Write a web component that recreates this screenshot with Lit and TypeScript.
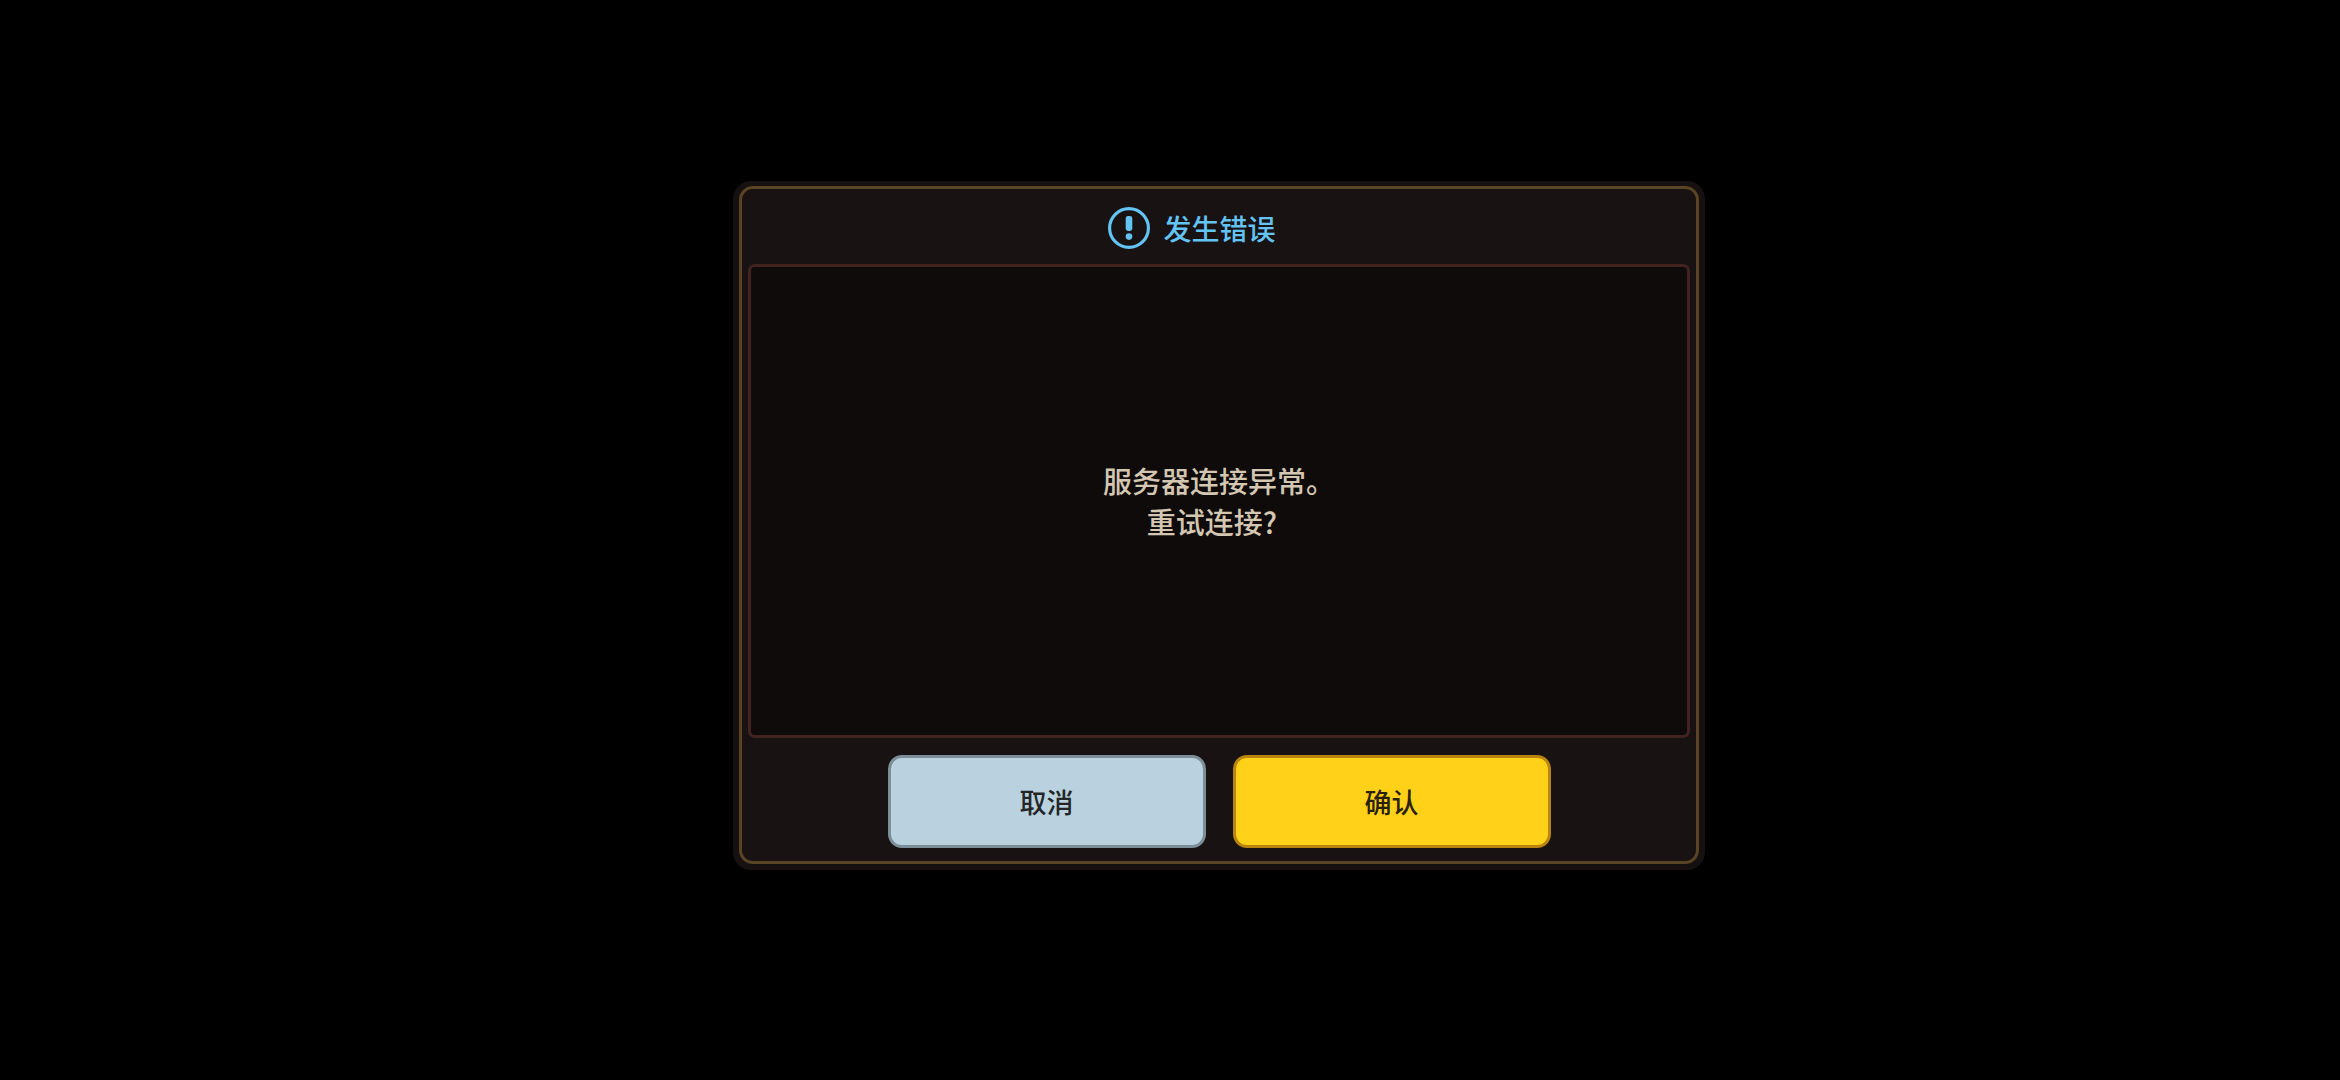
import { LitElement, html, css } from "lit";
import { customElement, property } from "lit/decorators.js";

@customElement("error-dialog")
export class ErrorDialog extends LitElement {
  @property() heading = "";
  @property({ attribute: false }) lines: string[] = [];

  static styles = css`
    :host {
      display: block;
      width: 100%;
      max-width: 972px;
      font-family: "Noto Sans CJK SC", sans-serif;
      font-weight: 500;
    }
    .dialog {
      box-sizing: border-box;
      padding: 5px 6px 6px;
      border-radius: 18px;
      background: #161110;
    }
    .frame {
      display: flex;
      flex-direction: column;
      padding: 0 6px 13px;
      border: 3px solid #594424;
      border-radius: 14px;
      background: #181212;
    }
    .header {
      box-sizing: border-box;
      display: flex;
      align-items: center;
      justify-content: center;
      gap: 13px;
      height: 75px;
      padding: 3px 54px 0 0;
      color: #63c3f2;
    }
    .icon {
      width: 42px;
      height: 42px;
      flex: none;
    }
    .title {
      margin: 0;
      font-size: 28px;
      line-height: 42px;
      font-weight: 500;
    }
    .message {
      display: flex;
      flex-direction: column;
      align-items: center;
      justify-content: center;
      min-height: 468px;
      border: 3px solid #42231f;
      border-radius: 7px;
      background: #0f0b0a;
      color: #d3c7b2;
      font-size: 29px;
      line-height: 41px;
    }
    .line {
      margin: 0;
    }
    .line:last-child {
      padding-right: 14px;
    }
    .actions {
      display: flex;
      justify-content: center;
      gap: 27px;
      padding-top: 17px;
    }
    .button {
      box-sizing: border-box;
      flex: 0 1 318px;
      height: 93px;
      padding: 0;
      border: 3px solid;
      border-radius: 14px;
      font: inherit;
      font-size: 27px;
      cursor: pointer;
    }
    .cancel {
      border-color: #7c8f99;
      background: #bad2e0;
      color: #232527;
    }
    .confirm {
      border-color: #b9850f;
      background: #ffd119;
      color: #2b2108;
    }
  `;

  render() {
    return html`
      <section class="dialog" role="alertdialog" aria-labelledby="title" aria-describedby="message">
        <div class="frame">
          <header class="header">
            <svg class="icon" viewBox="0 0 42 42" fill="none" aria-hidden="true">
              <circle cx="21" cy="21" r="19.4" stroke="currentColor" stroke-width="3.2" />
              <rect x="17.7" y="9" width="6.6" height="15" rx="2.4" fill="currentColor" />
              <circle cx="21" cy="29.6" r="3.3" fill="currentColor" />
            </svg>
            <h1 class="title" id="title">${this.heading}</h1>
          </header>
          <div class="message" id="message">
            ${this.lines.map((line) => html`<p class="line">${line}</p>`)}
          </div>
          <div class="actions">
            <button class="button cancel" type="button">取消</button>
            <button class="button confirm" type="button">确认</button>
          </div>
        </div>
      </section>
    `;
  }
}

@customElement("app-root")
export class AppRoot extends LitElement {
  static styles = css`
    :host {
      display: flex;
      align-items: center;
      justify-content: center;
      box-sizing: border-box;
      min-height: 100vh;
      padding: 0 0 29px 98px;
      background: #000;
    }
  `;

  render() {
    return html`
      <error-dialog heading="发生错误" .lines=${["服务器连接异常。", "重试连接?"]}></error-dialog>
    `;
  }
}
